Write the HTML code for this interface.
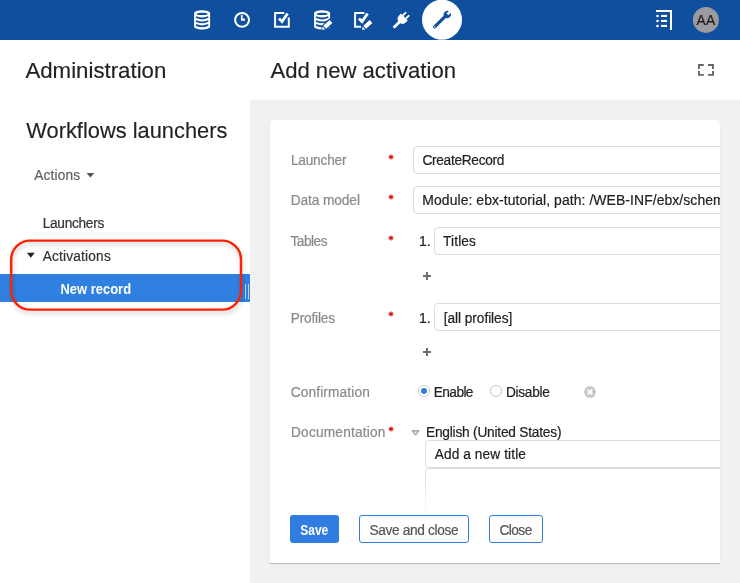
<!DOCTYPE html>
<html><head><meta charset="utf-8">
<style>
html,body{margin:0;padding:0;}
body{width:740px;height:583px;position:relative;overflow:hidden;background:#fff;font-family:"Liberation Sans",sans-serif;color:#333;}
.a{position:absolute;white-space:nowrap;-webkit-text-stroke:0.2px currentColor;}
.inp{position:absolute;box-sizing:border-box;height:27px;border:1px solid #dcdcdc;border-radius:4px;background:#fff;}
.plus{position:absolute;width:8px;height:8px;}
.plus:before{content:"";position:absolute;left:0;top:3px;width:8px;height:2px;background:#707070;}
.plus:after{content:"";position:absolute;left:3px;top:0;width:2px;height:8px;background:#707070;}
.btn{position:absolute;box-sizing:border-box;height:28px;border:1px solid #2f7de1;border-radius:3px;}
.req{position:absolute;width:4px;height:4px;}
.bl{display:inline-block;width:0;height:0;vertical-align:baseline;}
</style></head><body>
<div class="a" style="left:0;top:0;width:740px;height:40px;background:#0f4f9d;"></div>
<svg class="a" width="740" height="40" viewBox="0 0 740 40" style="left:0;top:0;">
<path d="M194.1 13.2 C194.1 9.3 210.1 9.3 210.1 13.2 L210.1 26.6 C210.1 30.6 194.1 30.6 194.1 26.6 Z" fill="#fff"/>
<ellipse cx="202.1" cy="13.9" rx="5.5" ry="1.15" fill="#0f4f9d"/>
<path d="M196.6 17.3 Q202.1 19.7 207.6 17.3" stroke="#0f4f9d" stroke-width="1.8" fill="none" stroke-linecap="round"/><path d="M196.6 21.2 Q202.1 23.599999999999998 207.6 21.2" stroke="#0f4f9d" stroke-width="1.8" fill="none" stroke-linecap="round"/><path d="M196.6 25.1 Q202.1 27.5 207.6 25.1" stroke="#0f4f9d" stroke-width="1.8" fill="none" stroke-linecap="round"/>
<circle cx="242.05" cy="19.85" r="6.95" fill="none" stroke="#fff" stroke-width="2"/>
<path d="M240.9 15.1 H242.6 V18.6 H245 V20.8 H240.9 Z" fill="#fff"/>
<path d="M284.3 13.1 H275.1 V26.7 H288.8 V17.4" fill="none" stroke="#fff" stroke-width="2"/>
<path d="M278.9 18.6 L282 21.6 L287.6 13.5" fill="none" stroke="#fff" stroke-width="2.8"/>
<path d="M314.1 13.2 C314.1 9.3 330.1 9.3 330.1 13.2 L330.1 26.6 C330.1 30.6 314.1 30.6 314.1 26.6 Z" fill="#fff"/>
<ellipse cx="322.1" cy="13.9" rx="5.5" ry="1.15" fill="#0f4f9d"/>
<path d="M316.6 17.3 Q322.1 19.7 327.6 17.3" stroke="#0f4f9d" stroke-width="1.8" fill="none" stroke-linecap="round"/><path d="M316.6 21.2 Q322.1 23.599999999999998 327.6 21.2" stroke="#0f4f9d" stroke-width="1.8" fill="none" stroke-linecap="round"/><path d="M316.6 25.1 Q322.1 27.5 327.6 25.1" stroke="#0f4f9d" stroke-width="1.8" fill="none" stroke-linecap="round"/>
<g transform="translate(0,0)">
<path d="M321.04 30.68 L322.00 25.38 L329.68 18.30 L334.09 23.08 L326.41 30.16 Z" fill="#0f4f9d"/>
<path d="M323.33 25.78 L329.61 19.99 L332.39 23.01 L326.11 28.80 Z" fill="#fff"/>
<path d="M322.00 29.80 L322.66 26.54 L325.31 29.40 Z" fill="#fff"/>
</g>
<path d="M364.4 13.1 H355.1 V26.7 H361" fill="none" stroke="#fff" stroke-width="2"/>
<path d="M358.9 18.6 L362 21.6 L367.6 13.5" fill="none" stroke="#fff" stroke-width="2.8"/>
<g transform="translate(40,0)">
<path d="M321.04 30.68 L322.00 25.38 L329.68 18.30 L334.09 23.08 L326.41 30.16 Z" fill="#0f4f9d"/>
<path d="M323.33 25.78 L329.61 19.99 L332.39 23.01 L326.11 28.80 Z" fill="#fff"/>
<path d="M322.00 29.80 L322.66 26.54 L325.31 29.40 Z" fill="#fff"/>
</g>
<g transform="translate(404.4 17) rotate(45)">
<path d="M-4.8 0 H4.8 V3 Q4.8 7 0 7.6 Q-4.8 7 -4.8 3 Z" fill="#fff"/>
<rect x="-3.1" y="-4.6" width="1.8" height="5" rx="0.5" fill="#fff"/>
<rect x="1.3" y="-4.6" width="1.8" height="5" rx="0.5" fill="#fff"/>
<rect x="-1.4" y="6" width="2.8" height="9.2" rx="0.6" fill="#fff"/>
</g>
<circle cx="442" cy="19.7" r="20" fill="#fff"/>
<path d="M434.6 26.8 L445 16.6" stroke="#0f4f9d" stroke-width="3.2" stroke-linecap="round"/>
<g transform="translate(447.3 14.5) rotate(45)">
<circle cx="0" cy="0" r="3.6" fill="#0f4f9d"/>
<rect x="-1.35" y="-5" width="2.7" height="4.8" fill="#fff"/>
</g>
<circle cx="434.6" cy="26.8" r="0.8" fill="#cfdcf0"/>
<path d="M656 11 H671 V30" fill="none" stroke="#fff" stroke-width="2"/>
<rect x="661" y="14.9" width="6" height="2.1" fill="#fff"/>
<rect x="661" y="19.9" width="6" height="2.1" fill="#fff"/>
<rect x="661" y="24.9" width="6" height="2.1" fill="#fff"/>
<circle cx="657.5" cy="16" r="1.3" fill="#fff"/>
<circle cx="657.5" cy="21" r="1.3" fill="#fff"/>
<circle cx="657.5" cy="26" r="1.3" fill="#fff"/>
<circle cx="705.9" cy="19.9" r="13" fill="#9b9b9f"/>
</svg>
<div class="a" style="left:696.60px;top:14.00px;font-size:13.700px;line-height:13.700px;color:#1a1a1a;letter-spacing:0.324px;transform:scaleY(1.05);transform-origin:0 11.00px;">AA</div>
<div class="a" style="left:25.40px;top:60.00px;font-size:22.254px;line-height:22.254px;color:#222;-webkit-text-stroke:0.15px currentColor;transform:scaleY(1.03);transform-origin:0 18.00px;">Administration</div>
<div class="a" style="left:26.30px;top:120.00px;font-size:21.853px;line-height:21.853px;color:#222;-webkit-text-stroke:0.15px currentColor;transform:scaleY(1.03);transform-origin:0 18.00px;">Workflows launchers</div>
<div class="a" style="left:34.20px;top:169.00px;font-size:13.700px;line-height:13.700px;color:#606060;letter-spacing:0.163px;transform:scaleY(1.05);transform-origin:0 11.00px;">Actions</div>
<svg class="a" style="left:80px;top:165px;" width="20" height="20" viewBox="80 165 20 20"><path d="M86.5 173H94.3L90.4 177.4Z" fill="#555"/></svg>
<div class="a" style="left:42.70px;top:217.00px;font-size:13.700px;line-height:13.700px;color:#333;letter-spacing:-0.297px;transform:scaleY(1.05);transform-origin:0 11.00px;">Launchers</div>
<svg class="a" style="left:20px;top:245px;" width="20" height="20" viewBox="20 245 20 20"><path d="M26.9 252.8H34.7L30.8 257.8Z" fill="#222"/></svg>
<div class="a" style="left:42.70px;top:250.00px;font-size:13.700px;line-height:13.700px;color:#333;letter-spacing:0.186px;transform:scaleY(1.05);transform-origin:0 11.00px;">Activations</div>
<div class="a" style="left:0;top:274px;width:250px;height:28px;background:#2f80e1;"></div>
<div class="a" style="left:60.50px;top:284.00px;font-size:12.964px;line-height:12.964px;color:#fff;font-weight:bold;-webkit-text-stroke:0;transform:scaleY(1.1);transform-origin:0 10.00px;">New record</div>
<div class="a" style="left:245.3px;top:284.3px;width:1px;height:15.2px;background:#bcd5f5;"></div>
<div class="a" style="left:248.2px;top:284.3px;width:1px;height:15.2px;background:#bcd5f5;"></div>
<svg class="a" style="left:0;top:230px;filter:drop-shadow(1.5px 3px 2px rgba(0,0,0,0.2));" width="260" height="95" viewBox="0 230 260 95"><rect x="11.2" y="240.6" width="229.8" height="69" rx="19" ry="19" fill="none" stroke="#ff2000" stroke-width="2.4"/></svg>
<div class="a" style="left:270.40px;top:60.00px;font-size:22.111px;line-height:22.111px;color:#222;-webkit-text-stroke:0.15px currentColor;transform:scaleY(1.03);transform-origin:0 18.00px;">Add new activation</div>
<svg class="a" style="left:698px;top:64px;" width="16" height="12" viewBox="0 0 16 12"><path d="M0.95 4.9V0.95H5.8M10 0.95H15V4.9M15 7V10.85H10M5.8 10.85H0.95V7" fill="none" stroke="#666" stroke-width="1.9"/></svg>
<div class="a" style="left:250px;top:100px;width:490px;height:483px;background:#f1f1f1;"></div>
<div class="a" style="left:270px;top:120px;width:450px;height:443px;background:#fff;border-radius:4px 4px 0 0;box-shadow:0 1px 1px rgba(0,0,0,0.25);overflow:hidden;">
<div class="a" style="left:20.90px;top:34.00px;font-size:13.700px;line-height:13.700px;color:#8a8a8a;letter-spacing:-0.204px;transform:scaleY(1.05);transform-origin:0 11.00px;">Launcher</div>
<svg class="a" style="left:117.60px;top:33.80px;" width="6" height="6" viewBox="0 0 6 6"><path d="M3 0.5V5.5M0.8 1.75L5.2 4.25M5.2 1.75L0.8 4.25" stroke="#e00" stroke-width="1.1"/></svg>
<div class="inp" style="left:143.00px;top:26.00px;width:337px;height:28.00px;"></div>
<div class="a" style="left:152.40px;top:34.00px;font-size:13.700px;line-height:13.700px;color:#222;letter-spacing:-0.289px;transform:scaleY(1.05);transform-origin:0 11.00px;">CreateRecord</div>
<div class="a" style="left:20.70px;top:74.00px;font-size:13.700px;line-height:13.700px;color:#8a8a8a;letter-spacing:-0.085px;transform:scaleY(1.05);transform-origin:0 11.00px;">Data model</div>
<svg class="a" style="left:117.60px;top:73.80px;" width="6" height="6" viewBox="0 0 6 6"><path d="M3 0.5V5.5M0.8 1.75L5.2 4.25M5.2 1.75L0.8 4.25" stroke="#e00" stroke-width="1.1"/></svg>
<div class="inp" style="left:143.00px;top:66.00px;width:337px;height:28.00px;"></div>
<div class="a" style="left:152.30px;top:74.00px;font-size:13.950px;line-height:13.950px;color:#222;letter-spacing:0.075px;transform:scaleY(1.05);transform-origin:0 11.00px;">Module: ebx-tutorial, path: /WEB-INF/ebx/schema/tutorial.xsd</div>
<div class="a" style="left:20.40px;top:115.00px;font-size:13.700px;line-height:13.700px;color:#8a8a8a;letter-spacing:-0.481px;transform:scaleY(1.05);transform-origin:0 11.00px;">Tables</div>
<svg class="a" style="left:117.60px;top:114.80px;" width="6" height="6" viewBox="0 0 6 6"><path d="M3 0.5V5.5M0.8 1.75L5.2 4.25M5.2 1.75L0.8 4.25" stroke="#e00" stroke-width="1.1"/></svg>
<div class="a" style="left:149.00px;top:114.00px;font-size:14.000px;line-height:14.000px;color:#222;transform:scaleY(1.05);transform-origin:0 12.00px;">1.</div>
<div class="inp" style="left:164.00px;top:107.00px;width:316px;height:28.00px;"></div>
<div class="a" style="left:173.10px;top:115.00px;font-size:13.700px;line-height:13.700px;color:#222;letter-spacing:0.136px;transform:scaleY(1.05);transform-origin:0 11.00px;">Titles</div>
<div class="plus" style="left:153px;top:152px;"></div>
<div class="a" style="left:20.70px;top:192.00px;font-size:13.700px;line-height:13.700px;color:#8a8a8a;letter-spacing:-0.184px;transform:scaleY(1.05);transform-origin:0 11.00px;">Profiles</div>
<svg class="a" style="left:117.60px;top:190.80px;" width="6" height="6" viewBox="0 0 6 6"><path d="M3 0.5V5.5M0.8 1.75L5.2 4.25M5.2 1.75L0.8 4.25" stroke="#e00" stroke-width="1.1"/></svg>
<div class="a" style="left:149.00px;top:191.00px;font-size:14.000px;line-height:14.000px;color:#222;transform:scaleY(1.05);transform-origin:0 12.00px;">1.</div>
<div class="inp" style="left:164.00px;top:183.00px;width:316px;height:28.00px;"></div>
<div class="a" style="left:173.80px;top:192.00px;font-size:13.700px;line-height:13.700px;color:#222;letter-spacing:-0.061px;transform:scaleY(1.05);transform-origin:0 11.00px;">[all profiles]</div>
<div class="plus" style="left:153px;top:228px;"></div>
<div class="a" style="left:20.70px;top:266.00px;font-size:13.700px;line-height:13.700px;color:#8a8a8a;letter-spacing:0.140px;transform:scaleY(1.05);transform-origin:0 11.00px;">Confirmation</div>
<div class="a" style="left:148px;top:265.2px;width:12px;height:12px;box-sizing:border-box;border:1px solid #c8c8c8;border-radius:50%;"></div>
<div class="a" style="left:151px;top:268.2px;width:6px;height:6px;border-radius:50%;background:#2f7de1;"></div>
<div class="a" style="left:163.80px;top:266.00px;font-size:13.700px;line-height:13.700px;color:#222;letter-spacing:-0.592px;transform:scaleY(1.05);transform-origin:0 11.00px;">Enable</div>
<div class="a" style="left:220.2px;top:265.2px;width:12px;height:12px;box-sizing:border-box;border:1px solid #c8c8c8;border-radius:50%;"></div>
<div class="a" style="left:235.90px;top:266.00px;font-size:13.700px;line-height:13.700px;color:#222;letter-spacing:-0.265px;transform:scaleY(1.05);transform-origin:0 11.00px;">Disable</div>
<svg class="a" style="left:314px;top:265.8px;" width="12" height="12" viewBox="0 0 12 12"><circle cx="6" cy="6" r="5.9" fill="#c8c8c8"/><path d="M3.7 3.7L8.3 8.3M8.3 3.7L3.7 8.3" stroke="#fff" stroke-width="1.8"/></svg>
<div class="a" style="left:21.00px;top:306.00px;font-size:13.700px;line-height:13.700px;color:#8a8a8a;letter-spacing:0.196px;transform:scaleY(1.05);transform-origin:0 11.00px;">Documentation</div>
<svg class="a" style="left:117.60px;top:306.30px;" width="6" height="6" viewBox="0 0 6 6"><path d="M3 0.5V5.5M0.8 1.75L5.2 4.25M5.2 1.75L0.8 4.25" stroke="#e00" stroke-width="1.1"/></svg>
<svg class="a" style="left:141px;top:310.3px;" width="9" height="6" viewBox="0 0 9 6"><path d="M1 0.8H8L4.5 5.2Z" fill="#ddd" stroke="#888" stroke-width="1"/></svg>
<div class="a" style="left:156.00px;top:306.00px;font-size:13.700px;line-height:13.700px;color:#222;letter-spacing:-0.205px;transform:scaleY(1.05);transform-origin:0 11.00px;">English (United States)</div>
<div class="inp" style="left:155.00px;top:320.00px;width:325px;height:28.00px;"></div>
<div class="a" style="left:164.70px;top:328.00px;font-size:13.700px;line-height:13.700px;color:#222;letter-spacing:0.102px;transform:scaleY(1.05);transform-origin:0 11.00px;">Add a new title</div>
<div class="a" style="left:155px;top:348px;width:330px;height:120px;box-sizing:border-box;border:1px solid #dcdcdc;border-radius:4px;"></div>
<div class="a" style="left:150px;top:364px;width:340px;height:100px;background:linear-gradient(rgba(255,255,255,0.25),rgba(255,255,255,0.93) 30%);"></div>
<div class="a" style="left:20px;top:395px;width:49px;height:28px;border-radius:3px;background:#2f7de1;"></div>
<div class="a" style="left:30.20px;top:405.00px;font-size:12.034px;line-height:12.034px;color:#fff;font-weight:bold;-webkit-text-stroke:0;transform:scaleY(1.17);transform-origin:0 10.00px;">Save</div>
<div class="btn" style="left:89px;top:395px;width:110px;"></div>
<div class="a" style="left:99.50px;top:404.00px;font-size:13.700px;line-height:13.700px;color:#555;letter-spacing:-0.352px;transform:scaleY(1.05);transform-origin:0 11.00px;">Save and close</div>
<div class="btn" style="left:219px;top:395px;width:54px;"></div>
<div class="a" style="left:229.40px;top:404.00px;font-size:13.700px;line-height:13.700px;color:#555;letter-spacing:-0.533px;transform:scaleY(1.05);transform-origin:0 11.00px;">Close</div>
</div>
</body></html>
